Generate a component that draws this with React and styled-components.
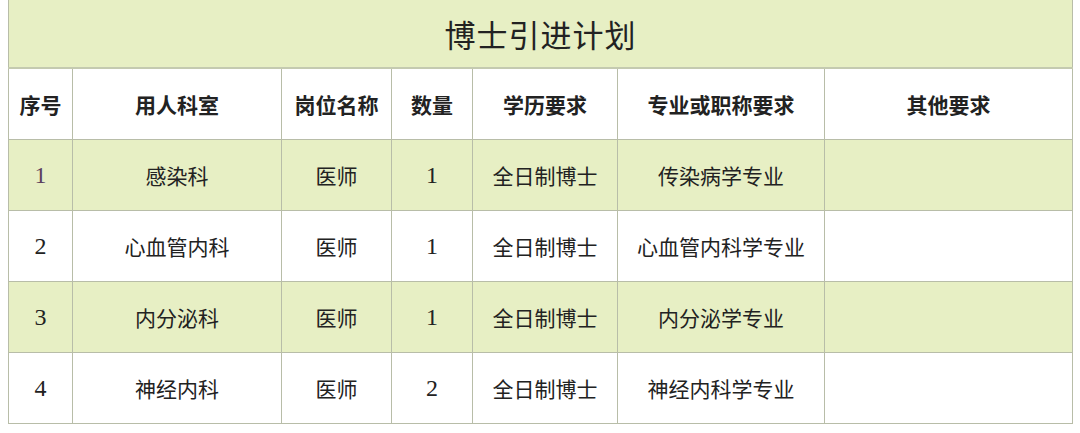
import React from "react";
import styled, { createGlobalStyle } from "styled-components";

const GlobalStyle = createGlobalStyle`
  html, body {
    margin: 0;
    background: #ffffff;
  }
`;

const Page = styled.div`
  padding: 0 8px;
  width: 1064px;
`;

const Table = styled.table`
  width: 1064px;
  border-collapse: collapse;
  table-layout: fixed;
  font-family: "Liberation Serif", "Noto Sans CJK SC", serif;
  color: #222;
  border: 1px solid #b8bda8;
  border-top: none;
`;

const Title = styled.th`
  height: 67px;
  background: #e7efc4;
  font-size: 31px;
  font-weight: 400;
  letter-spacing: 1px;
  border-bottom: 2px solid #c4cab0;
  padding: 0;
`;

const HeadCell = styled.th`
  height: 70px;
  background: #ffffff;
  font-family: "Noto Sans CJK SC", sans-serif;
  font-size: 21px;
  font-weight: 700;
  border: 1px solid #b8bda8;
  padding: 0;
`;

const Row = styled.tr`
  background: ${(p) => (p.$shaded ? "#e7efc4" : "#ffffff")};
`;

const Cell = styled.td`
  height: 70px;
  text-align: center;
  font-size: ${(p) => (p.$num ? "24px" : "21px")};
  border: 1px solid #b8bda8;
  padding: 0;
  color: ${(p) => p.$tone || "#222"};
`;

const columns = [64, 209, 110, 81, 145, 207, 248];

const headers = ["序号", "用人科室", "岗位名称", "数量", "学历要求", "专业或职称要求", "其他要求"];

const rows = [
  { no: "1", dept: "感染科", post: "医师", count: "1", edu: "全日制博士", major: "传染病学专业" },
  { no: "2", dept: "心血管内科", post: "医师", count: "1", edu: "全日制博士", major: "心血管内科学专业" },
  { no: "3", dept: "内分泌科", post: "医师", count: "1", edu: "全日制博士", major: "内分泌学专业" },
  { no: "4", dept: "神经内科", post: "医师", count: "2", edu: "全日制博士", major: "神经内科学专业" },
];

export default function App() {
  return (
    <>
      <GlobalStyle />
      <Page>
        <Table>
          <colgroup>
            {columns.map((w, i) => (
              <col key={i} style={{ width: w }} />
            ))}
          </colgroup>
          <thead>
            <tr>
              <Title colSpan={7}>博士引进计划</Title>
            </tr>
            <tr>
              {headers.map((h) => (
                <HeadCell key={h}>{h}</HeadCell>
              ))}
            </tr>
          </thead>
          <tbody>
            {rows.map((r, i) => (
              <Row key={r.no} $shaded={i % 2 === 0}>
                <Cell $num $tone={i === 0 ? "#5b3f5e" : undefined}>{r.no}</Cell>
                <Cell>{r.dept}</Cell>
                <Cell>{r.post}</Cell>
                <Cell $num>{r.count}</Cell>
                <Cell>{r.edu}</Cell>
                <Cell>{r.major}</Cell>
                <Cell />
              </Row>
            ))}
          </tbody>
        </Table>
      </Page>
    </>
  );
}
